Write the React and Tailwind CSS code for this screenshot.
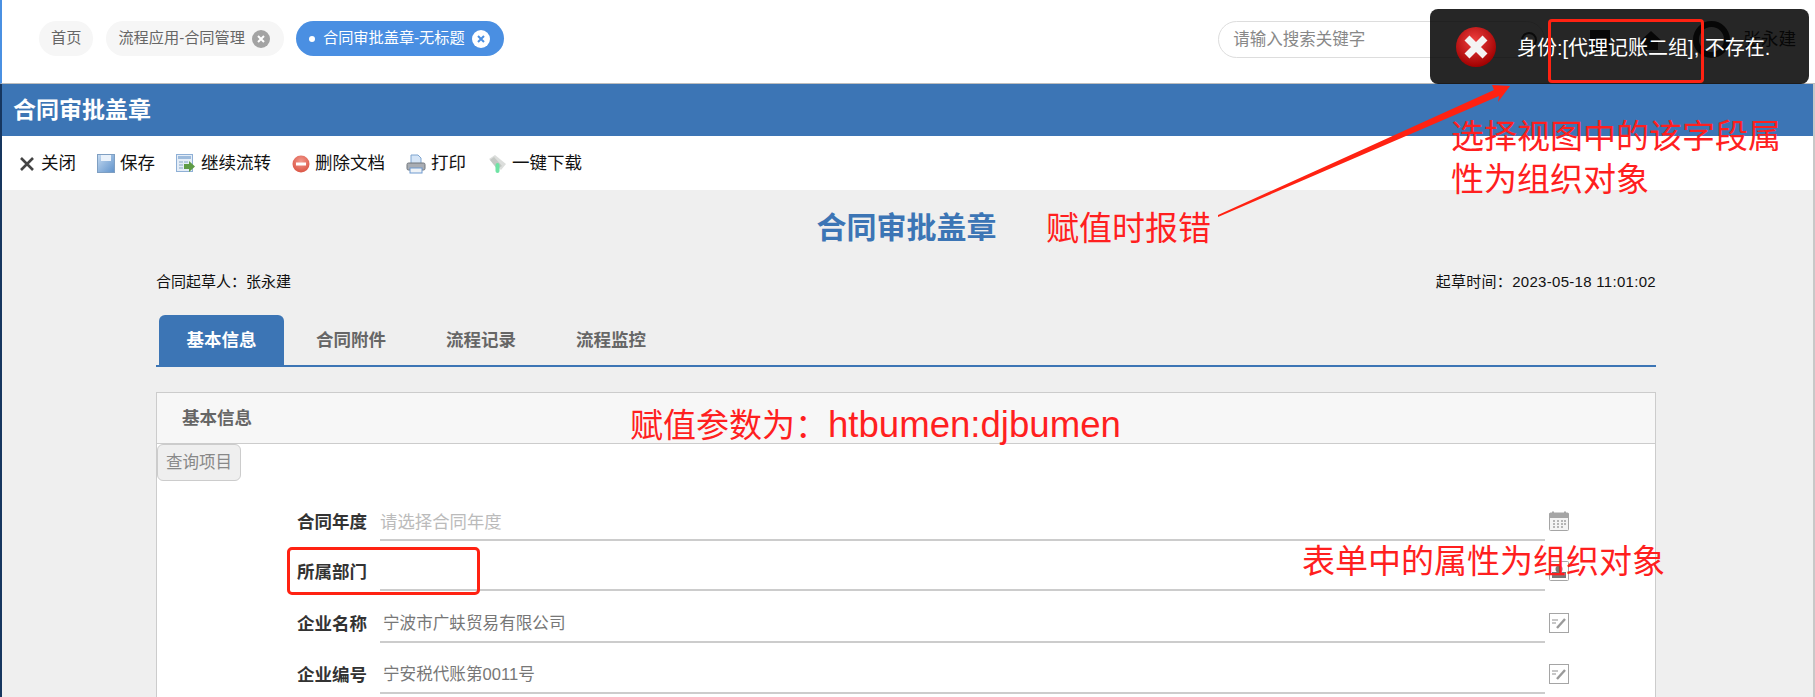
import React from 'react'

// toolbar + form icons, drawn by hand since they are old bitmap-style icons
function CloseIcon() {
    return (
        <svg width="18" height="18" viewBox="0 0 18 18" className="shrink-0">
            <path d="M3 3 L15 15 M15 3 L3 15" stroke="#444" strokeWidth="2.6" />
        </svg>
    )
}

function SaveIcon() {
    return (
        <svg width="18" height="19" viewBox="0 0 18 19" className="shrink-0">
            <defs>
                <linearGradient id="sv" x1="0" y1="0" x2="1" y2="1">
                    <stop offset="0" stopColor="#c6dbf1" />
                    <stop offset="1" stopColor="#5f92cb" />
                </linearGradient>
            </defs>
            <rect x="0.5" y="0.5" width="17" height="18" fill="url(#sv)" stroke="#7f9fc2" />
            <rect x="4" y="1" width="10" height="6" fill="#e9f1fa" />
        </svg>
    )
}

function FlowIcon() {
    return (
        <svg width="20" height="20" viewBox="0 0 20 20" className="shrink-0">
            <rect x="0.5" y="0.5" width="16" height="17" fill="#e4edf7" stroke="#8fb0d6" />
            <rect x="2" y="2" width="13" height="3" fill="#9dbbdc" />
            <path d="M3 7h4v2H3zM3 10h4v2H3zM3 13h4v2H3zM8 7h4v2H8z" fill="#b5c9df" />
            <path d="M8 10h5V7l6 5.5-6 5.5v-3H8z" fill="#5d9b46" />
        </svg>
    )
}

function DeleteIcon() {
    return (
        <svg width="18" height="18" viewBox="0 0 18 18" className="shrink-0">
            <defs>
                <radialGradient id="dl" cx="0.5" cy="0.35" r="0.7">
                    <stop offset="0" stopColor="#f29a8e" />
                    <stop offset="1" stopColor="#d9503f" />
                </radialGradient>
            </defs>
            <circle cx="9" cy="9" r="8.5" fill="url(#dl)" />
            <rect x="4" y="7.5" width="10" height="3" fill="#fff" />
        </svg>
    )
}

function PrintIcon() {
    return (
        <svg width="20" height="20" viewBox="0 0 20 20" className="shrink-0">
            <path d="M5 1h7l3 3v6H5z" fill="#d5e5f7" stroke="#7fa5d0" />
            <rect x="1" y="9" width="18" height="7" rx="1.5" fill="#a9adb3" stroke="#71767c" />
            <rect x="4" y="14" width="12" height="5" fill="#eef2f6" stroke="#6f9ad0" />
        </svg>
    )
}

function DownloadIcon() {
    return (
        <svg width="20" height="20" viewBox="0 0 20 20" className="shrink-0">
            <path d="M2 5 L8 1 L19 10 L14 16 Z" fill="#dcdedc" />
            <path d="M3 6 L7 3 L15 12 L10 15 Z" fill="#c4c8c4" />
            <rect x="8.5" y="9" width="4" height="10" rx="2" fill="#6fe3a4" />
        </svg>
    )
}

function CalendarIcon() {
    return (
        <svg width="20" height="20" viewBox="0 0 20 20">
            <rect x="0.5" y="2" width="19" height="17.5" rx="1" fill="#f4f4f4" stroke="#a5a5a5" />
            <rect x="0.5" y="2" width="19" height="5" fill="#a5a5a5" />
            <rect x="3" y="0.5" width="2" height="3" fill="#a5a5a5" />
            <rect x="15" y="0.5" width="2" height="3" fill="#a5a5a5" />
            <path d="M4 9h2v2H4zM8 9h2v2H8zM12 9h2v2h-2zM15 9h2v2h-2zM4 12h2v2H4zM8 12h2v2H8zM12 12h2v2h-2zM15 12h2v2h-2zM4 15h2v2H4zM8 15h2v2H8zM12 15h2v2h-2z" fill="#b5b5b5" />
        </svg>
    )
}

function OrgIcon() {
    return (
        <svg width="20" height="20" viewBox="0 0 20 20">
            <rect x="0.5" y="0.5" width="19" height="19" rx="1" fill="#fff" stroke="#a5a5a5" />
            <circle cx="10" cy="8" r="3.5" fill="#777" />
            <rect x="3" y="11" width="14" height="6" fill="#777" />
        </svg>
    )
}

function EditIcon() {
    return (
        <svg width="20" height="20" viewBox="0 0 20 20">
            <rect x="0.5" y="0.5" width="19" height="19" fill="#fff" stroke="#a5a5a5" />
            <path d="M3 7h6M3 10h4" stroke="#b5b5b5" strokeWidth="1.4" />
            <path d="M8 15 L16 6" stroke="#9a9a9a" strokeWidth="2.4" />
        </svg>
    )
}

function PillClose({ active }) {
    return (
        <span className={`ml-[7px] flex h-[18px] w-[18px] items-center justify-center rounded-full ${active ? 'bg-white' : 'bg-[#a3a3a3]'}`}>
            <svg width="10" height="10" viewBox="0 0 10 10">
                <path d="M2 2 L8 8 M8 2 L2 8" stroke={active ? '#4a8fe2' : '#fff'} strokeWidth="2" />
            </svg>
        </span>
    )
}

const toolbar = [
    { label: '关闭', icon: <CloseIcon /> },
    { label: '保存', icon: <SaveIcon /> },
    { label: '继续流转', icon: <FlowIcon /> },
    { label: '删除文档', icon: <DeleteIcon /> },
    { label: '打印', icon: <PrintIcon /> },
    { label: '一键下载', icon: <DownloadIcon /> },
]

const rows = [
    { label: '合同年度', placeholder: '请选择合同年度', icon: <CalendarIcon />, height: 'h-[51px]' },
    { label: '所属部门', value: '', icon: <OrgIcon />, height: 'h-[50px]' },
    { label: '企业名称', value: '宁波市广蚨贸易有限公司', icon: <EditIcon />, height: 'h-[52px]' },
    { label: '企业编号', value: '宁安税代账第0011号', icon: <EditIcon />, height: 'h-[51px]' },
]

const tabs = ['合同附件', '流程记录', '流程监控']

export default function App() {
    return (
        <div className="relative h-[697px] w-full overflow-hidden bg-white font-['Liberation_Sans','Noto_Sans_CJK_SC',sans-serif]">
            {/* top bar */}
            <div className="flex h-[84px] items-start border-b border-l-2 border-b-[#bdbdbd] border-l-[#4a90e2] bg-white pt-[21px]">
                <div className="ml-[37px] flex h-[35px] items-center rounded-full bg-[#f6f6f6] px-[12px] text-[15.2px] text-[#666]">首页</div>
                <div className="ml-[13px] flex h-[35px] items-center rounded-full bg-[#f6f6f6] pl-[12px] pr-[14px] text-[15.2px] text-[#666]">
                    流程应用-合同管理
                    <PillClose />
                </div>
                <div className="ml-[12px] flex h-[35px] items-center rounded-full bg-[#4a8fe2] pl-[13px] pr-[14px] text-[15.2px] text-white">
                    <span className="mr-[8px] h-[6px] w-[6px] rounded-full bg-white" />
                    合同审批盖章-无标题
                    <PillClose active />
                </div>
                <div className="ml-auto mr-[19px] flex h-[37px] items-center">
                    <div className="flex h-[37px] w-[327px] items-center justify-between rounded-full border border-[#ddd] pl-[14px] pr-[7px] text-[16.5px] text-[#888]">
                        请输入搜索关键字
                        <span className="h-[16px] w-[16px] rounded-full border-2 border-[#444]" />
                    </div>
                    <div className="ml-[45px] h-[20px] w-[20px] bg-[#333]" />
                    <svg width="22" height="20" viewBox="0 0 22 20" className="ml-[30px]">
                        <path d="M11 1 L22 11 H18 V20 H4 V11 H0 Z" fill="#333" />
                    </svg>
                    <div className="ml-[31px] h-[37px] w-[37px] rounded-full border-[6px] border-[#333]" />
                    <div className="ml-[13px] text-[17.6px] text-[#333]">张永建</div>
                </div>
            </div>

            {/* title bar */}
            <div className="flex h-[52px] items-center border-l-2 border-r-2 border-l-[#16365f] border-r-[#c8c8c8] bg-[#3c75b5] pl-[11px] text-[23px] font-bold text-white">
                合同审批盖章
            </div>

            {/* toolbar */}
            <div className="flex h-[54px] items-center gap-[21px] border-l-2 border-r-2 border-l-[#16365f] border-r-[#c8c8c8] bg-white pl-[16px]">
                {toolbar.map((t) => (
                    <div key={t.label} className="flex items-center gap-[5px] pt-[1px] text-[17.5px] leading-none text-[#111]">
                        {t.icon}
                        <span>{t.label}</span>
                    </div>
                ))}
            </div>

            {/* form body */}
            <div className="h-[507px] overflow-hidden border-l-2 border-r-2 border-l-[#16365f] border-r-[#c8c8c8] bg-[#efefef]">
                <div className="pr-[2px] pt-[18px] text-center text-[30px] font-bold leading-[40px] text-[#3c75b5]">合同审批盖章</div>

                <div className="ml-[154px] w-[1500px]">
                    <div className="mt-[24px] flex h-[20px] items-center justify-between text-[15px] text-[#111]">
                        <span>合同起草人：张永建</span>
                        <span className="tracking-[0.3px]">起草时间：2023-05-18 11:01:02</span>
                    </div>

                    <div className="mt-[23px] flex h-[52px] items-start border-b-2 border-[#3c75b5] pl-[3px]">
                        <div className="flex h-[50px] w-[125px] items-center justify-center rounded-t-[6px] bg-[#3c75b5] text-[17.5px] font-bold text-white">基本信息</div>
                        <div className="ml-[5px] flex gap-[60px] pl-[27px]">
                            {tabs.map((t) => (
                                <div key={t} className="flex h-[50px] items-center text-[17.5px] font-bold text-[#666]">{t}</div>
                            ))}
                        </div>
                    </div>

                    <div className="mt-[25px] h-[400px] border border-[#ccc] bg-white">
                        <div className="flex h-[51px] items-center border-b border-[#ccc] bg-[#f7f7f7] pl-[25px] text-[17.5px] font-bold text-[#666]">基本信息</div>
                        <div className="flex h-[37px] w-[84px] items-center justify-center rounded-[6px] border border-[#ccc] bg-[#efefef] text-[16.5px] text-[#888]">查询项目</div>
                        <div className="mt-[9px] pl-[140px]">
                            {rows.map((r) => (
                                <div key={r.label} className={`flex items-end ${r.height}`}>
                                    <div className="w-[83px] pb-[7px] text-[17.5px] font-bold leading-[24px] text-[#333]">{r.label}</div>
                                    <div className="flex h-full w-[1165px] items-end border-b-2 border-[#ccc] pb-[5px]">
                                        {r.placeholder ? (
                                            <span className="text-[17.4px] leading-[24px] text-[#bbb]">{r.placeholder}</span>
                                        ) : (
                                            <span className="pl-[3px] text-[16.6px] leading-[24px] text-[#777]">{r.value}</span>
                                        )}
                                    </div>
                                    <div className="ml-[4px] pb-[10px]">{r.icon}</div>
                                </div>
                            ))}
                        </div>
                    </div>
                </div>
            </div>

            {/* error toast, translucent so the header shows through */}
            <div className="absolute left-[1430px] top-[9px] flex h-[75px] w-[379px] items-center rounded-[8px] bg-black/85 text-[20px] text-white">
                <svg width="42" height="42" viewBox="0 0 42 42" className="ml-[25px] shrink-0">
                    <defs>
                        <radialGradient id="er" cx="0.45" cy="0.35" r="0.65">
                            <stop offset="0" stopColor="#f04040" />
                            <stop offset="1" stopColor="#a00000" />
                        </radialGradient>
                    </defs>
                    <circle cx="21" cy="21" r="20" fill="url(#er)" />
                    <path d="M12 12 L30 30 M30 12 L12 30" stroke="#f4f4f4" strokeWidth="7" />
                </svg>
                <span className="ml-[20px] whitespace-nowrap pt-[3px]">身份:[代理记账二组], 不存在.</span>
            </div>

            {/* red annotations */}
            <div className="absolute left-[1548px] top-[19px] h-[64px] w-[156px] rounded-[4px] border-[3px] border-[#ff2212]" />
            <div className="absolute left-[287px] top-[547px] h-[48px] w-[193px] rounded-[5px] border-[3px] border-[#ff2212]" />
            <svg width="1815" height="697" className="pointer-events-none absolute left-0 top-0">
                <polygon points="1218,215 1494,90 1492,85 1510,86 1498,102 1499,96 1218,217" fill="#ff2212" />
            </svg>
            <div className="absolute left-[1451px] top-[115px] w-[340px] text-[33px] leading-[43px] text-[#ff1f1f]">选择视图中的该字段属性为组织对象</div>
            <div className="absolute left-[1046px] top-[205px] text-[33px] leading-[48px] text-[#ff1f1f]">赋值时报错</div>
            <div className="absolute left-[630px] top-[401px] whitespace-nowrap text-[33px] leading-[48px] text-[#ff1f1f]">
                赋值参数为：<span className="text-[36.6px]">htbumen:djbumen</span>
            </div>
            <div className="absolute left-[1302px] top-[538px] whitespace-nowrap text-[33px] leading-[48px] text-[#ff1f1f]">表单中的属性为组织对象</div>
        </div>
    )
}
